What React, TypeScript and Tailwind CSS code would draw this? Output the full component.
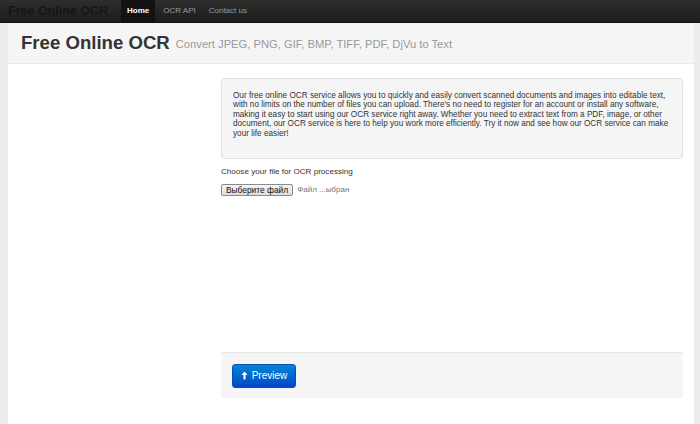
import React from "react";

function ArrowUp() {
  return (
    <svg width="7" height="9" viewBox="0 0 7 9" className="shrink-0">
      <path d="M3.5 0.5 L6.5 4 L4.5 4 L4.5 8.5 L2.5 8.5 L2.5 4 L0.5 4 Z" fill="#ffffff" />
    </svg>
  );
}

export default function App() {
  return (
    <div className="w-[700px] h-[424px] bg-[#ececec] flex flex-col overflow-hidden font-['Liberation_Sans',Arial,sans-serif]">
      {/* navbar */}
      <div className="h-[23px] shrink-0 flex items-stretch bg-gradient-to-b from-[#2e2e2e] to-[#1d1d1d] border-b border-[#111]">
        <div className="pl-[8px] pr-[13px] flex items-center text-[12.5px] font-bold text-[#161616] leading-none">
          Free Online OCR
        </div>
        <div className="flex items-stretch text-[8px] leading-none">
          <div className="bg-[#131313] px-[6px] flex items-center font-bold text-white">Home</div>
          <div className="pl-[8px] pr-[6px] flex items-center text-[#9a9a9a]">OCR API</div>
          <div className="px-[7px] flex items-center text-[#9a9a9a]">Contact us</div>
        </div>
      </div>

      {/* page */}
      <div className="flex-1 flex pl-[8px] pr-[6px]">
        <div className="flex-1 min-w-0 bg-white flex flex-col">
          {/* header */}
          <div className="h-[41px] shrink-0 bg-[#f5f5f5] border-b border-[#e8e8e8] px-[13px] flex items-center gap-[6px]">
            <span className="text-[18.6px] font-bold text-[#333] leading-none">Free Online OCR</span>
            <span className="text-[11.2px] text-[#999] leading-none mt-[4px]">
              Convert JPEG, PNG, GIF, BMP, TIFF, PDF, DjVu to Text
            </span>
          </div>

          {/* content */}
          <div className="pl-[213px] pr-[11px] pt-[14px] flex flex-col">
            <div className="w-[462px] overflow-hidden bg-[#f5f5f5] border border-[#e3e3e3] rounded-[3px] pl-[11px] pr-[8px] pt-[12px] pb-[20px] text-[8.2px] leading-[9.4px] text-[#333] whitespace-nowrap">
              Our free online OCR service allows you to quickly and easily convert scanned documents and images into editable text,
              <br />
              with no limits on the number of files you can upload. There's no need to register for an account or install any software,
              <br />
              making it easy to start using our OCR service right away. Whether you need to extract text from a PDF, image, or other
              <br />
              document, our OCR service is here to help you work more efficiently. Try it now and see how our OCR service can make
              <br />
              your life easier!
            </div>

            <div className="mt-[8px] text-[8.1px] leading-[10px] text-[#333]">Choose your file for OCR processing</div>

            <div className="mt-[7px] flex items-center gap-[4px]">
              <span className="h-[12px] px-[4px] border border-[#8a8a8a] rounded-[2px] bg-gradient-to-b from-[#f6f6f6] to-[#dddddd] text-[8.4px] leading-[10px] text-[#111] flex items-center">
                Выберите файл
              </span>
              <span className="text-[8px] leading-none text-[#777]">Файл ...ыбран</span>
            </div>

            <div className="mt-[156px] w-[462px] bg-[#f5f5f5] border-t border-[#e5e5e5] h-[46px] pl-[11px] flex items-center">
              <div className="h-[24px] w-[64px] rounded-[3px] bg-gradient-to-b from-[#0a86d6] to-[#0145c8] border border-[#0a4fb0] flex items-center justify-center gap-[4px] text-white text-[10px] leading-none">
                <ArrowUp />
                <span>Preview</span>
              </div>
            </div>
          </div>
        </div>
      </div>
    </div>
  );
}
